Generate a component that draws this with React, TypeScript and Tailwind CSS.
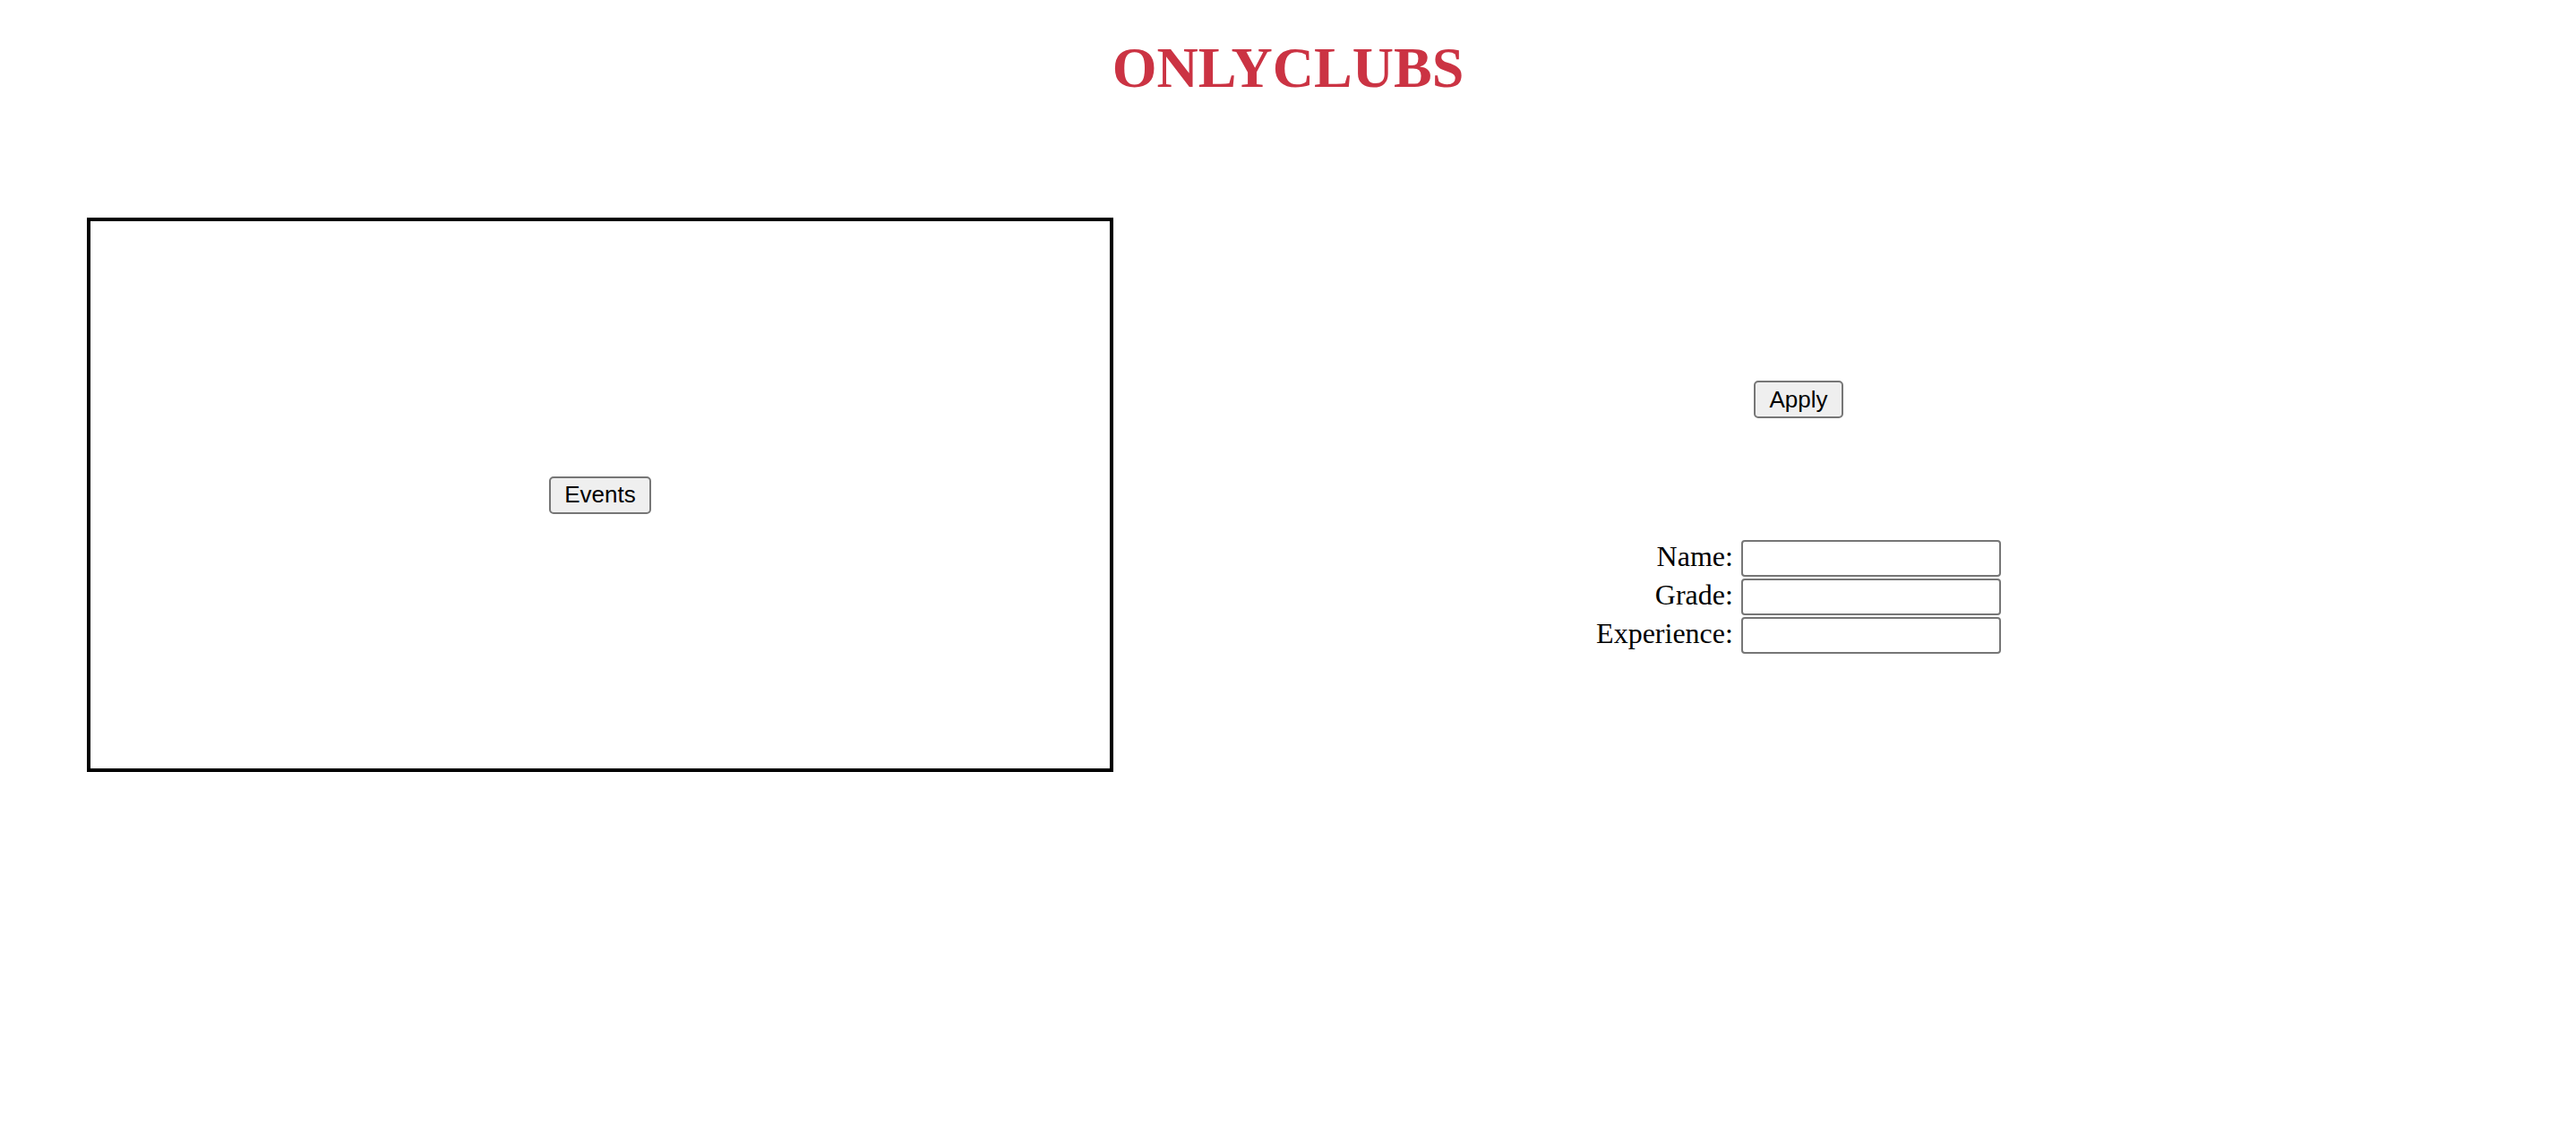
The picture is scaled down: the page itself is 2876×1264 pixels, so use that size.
export default function App() {
  return (
    <div className="min-h-screen w-full bg-white">
      <h1
        className="pt-[44px] text-center text-[64px] leading-[64px] font-bold text-[#cb3343]"
        style={{ fontFamily: '"Liberation Serif", "Times New Roman", serif' }}
      >
        ONLYCLUBS
      </h1>
      <div className="mt-[135px] flex pl-[97px] pr-[103px]">
        <div className="flex h-[619px] w-[1146px] items-center justify-center border-4 border-black">
          <button
            className="flex h-[42px] items-center justify-center rounded-[5px] border-2 border-[#767676] bg-[#efefef] px-[15px] text-[26px] text-black"
            style={{ fontFamily: '"Liberation Sans", Arial, sans-serif' }}
          >
            Events
          </button>
        </div>
        <div className="flex flex-1 flex-col items-center pt-[182px]">
          <button
            className="flex h-[42px] items-center justify-center rounded-[5px] border-2 border-[#767676] bg-[#efefef] px-[15px] text-[26px] text-black"
            style={{ fontFamily: '"Liberation Sans", Arial, sans-serif' }}
          >
            Apply
          </button>
          <div
            className="mt-[135px] grid grid-cols-[auto_auto] gap-x-[9px] text-[32px] text-black"
            style={{ fontFamily: '"Liberation Serif", "Times New Roman", serif' }}
          >
            {["Name:", "Grade:", "Experience:"].map((label) => (
              <div key={label} className="contents">
                <div className="h-[43px] pt-[2px] text-right leading-[35px]">{label}</div>
                <div className="h-[43px]">
                  <input
                    type="text"
                    className="mt-[1px] block h-[41px] w-[290px] rounded-[4px] border-2 border-[#767676] bg-white px-2 text-[26px] outline-none"
                  />
                </div>
              </div>
            ))}
          </div>
        </div>
      </div>
    </div>
  );
}
